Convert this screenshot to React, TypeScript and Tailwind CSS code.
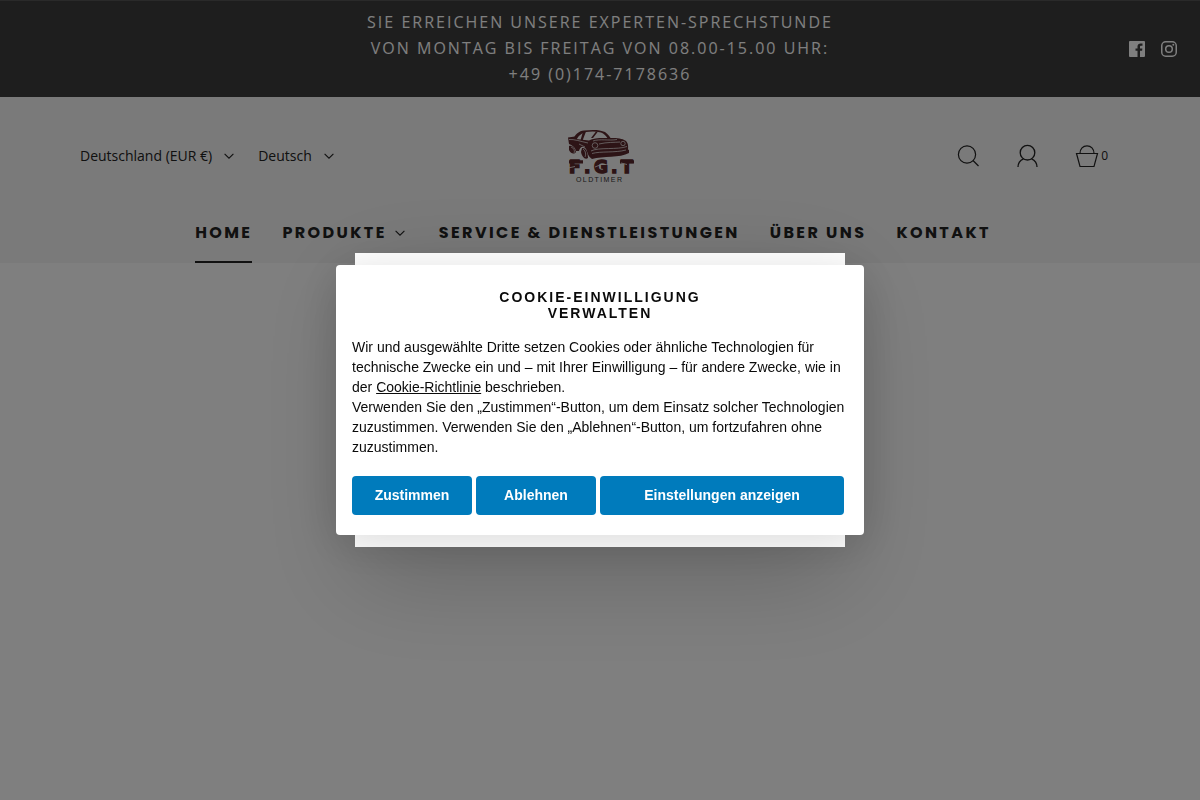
import React from "react";

const NAV = ["Home", "Produkte", "Service & Dienstleistungen", "Über uns", "Kontakt"];

function Chevron() {
  return (
    <svg width="10" height="6" viewBox="0 0 10 6" fill="none" stroke="currentColor" strokeWidth="1.1" aria-hidden="true">
      <path d="M0.6 0.8 5 5.2 9.4 0.8" />
    </svg>
  );
}

function Logo() {
  return (
    <svg width="68" height="54" viewBox="0 0 68 54" fill="#5a282c" role="img" aria-label="F.G.T Oldtimer">
      <path fillRule="evenodd" d="M6 11C8 5 12 2 17 1.500C25 .5 33 .5 38 3C41 5 43 8 44 10L41 10C39 7 37 4.500 34 3.500C29 2.200 23 2.400 19 3C14 4.500 11 7 9 12Z" />
      <path d="M16 2.500 19 2.500 15 13 13 13ZM29 2.500 31 2.500 26 9 24 9Z" />
      <path d="M1 8.500 8 7.500 9 10 22 11.500C27 8.500 34 9 43 9C51 8.500 57 10 59 12C62 15 61 19 61 22L60 24C54 26 43 26 37 28L24 28C21 28 21 24 19 20C16 16 13 18 12 22L9 22C8 18 5 16 2 15Z" />
      <path d="M2 17C5 16 8 19 9 23C7 26 3 24 2 21ZM15 19C19 18 21 24 21 29C18 31 15 28 14 23Z" />
      <g fill="none" stroke="#f4f4f4" strokeWidth="0.7">
        <path d="M2 10.500C7 10 14 12.500 21 14M12 15 18 18M26 12C33 9.500 42 12 50 10.500M32 15C40 13 48 13.500 53 13" />
        <path d="M24 22C31 18 51 21 60 17.500M25 24.500C34 22 48 24 59 21" />
        <circle cx="28" cy="16.500" r="2.800" />
        <circle cx="56" cy="14.500" r="2.200" />
        <path d="M4 18C7 19 8 22 7 24M16 20C19 22 19 26 18 28" />
      </g>
      <path d="M22 27.500C34 23 52 27 62 20.500L62 24C53 29 36 27 25 30Z" />
      <g fontFamily="DejaVu Sans, sans-serif" fontWeight="700" fontSize="17" stroke="#5a282c" strokeWidth="1.4">
        <text x="2" y="44">F</text>
        <text x="17" y="44">.</text>
        <text x="27" y="44">G</text>
        <text x="44" y="44">.</text>
        <text x="54" y="44">T</text>
      </g>
      <path d="M2 31.300H16V34.500H2ZM53 31.300H67V34.500H53Z" />
      <path d="M1 39 8 37.500M28 38 33 36M54 34 60 35.500" stroke="#f4f4f4" strokeWidth="0.8" />
      <text x="9" y="53" className="tracking-[0.2em]" fontFamily="Liberation Sans, sans-serif" fontSize="7" fill="#333">OLDTIMER</text>
    </svg>
  );
}

function AnnouncementBar() {
  return (
    <div className="grid grid-cols-[1fr_480px_1fr] items-center border-t border-[#555] bg-[#3c3c3c] pt-2 pb-[10px] text-white">
      <p className="col-start-2 text-center text-base leading-[26px] tracking-[2px] uppercase">
        Sie erreichen unsere Experten-Sprechstunde von Montag bis Freitag von 08.00-15.00 Uhr: +49 (0)174-7178636
      </p>
      <div className="flex justify-end gap-4 pt-[2px] pr-[23px]">
        <a href="#facebook" aria-label="Facebook">
          <svg width="16" height="16" viewBox="0 0 16 16" fill="currentColor">
            <path d="M15.100 0H.9A.9.900 0 0 0 0 .9v14.200c0 .5.400.9.900.9h7.600V9.800H6.500V7.400h2V5.600c0-2.100 1.300-3.200 3.100-3.200.9 0 1.700.1 1.900.1v2.200h-1.300c-1 0-1.200.5-1.200 1.200v1.500h2.400l-.3 2.400H11V16h4.100c.5 0 .9-.4.900-.9V.9a.9.900 0 0 0-.9-.9Z" />
          </svg>
        </a>
        <a href="#instagram" aria-label="Instagram">
          <svg width="16" height="16" viewBox="0 0 16 16" fill="none" stroke="currentColor" strokeWidth="1.500">
            <rect x="0.750" y="0.750" width="14.500" height="14.500" rx="4" />
            <circle cx="8" cy="8" r="3.300" />
            <circle cx="12.300" cy="3.700" r="1" fill="currentColor" stroke="none" />
          </svg>
        </a>
      </div>
    </div>
  );
}

function Header() {
  return (
    <header className="bg-[#f4f4f4] pt-8 text-[#222]">
      <div className="grid grid-cols-[1fr_auto_1fr] items-center px-20">
        <div className="flex gap-6 text-sm">
          <button className="flex items-center gap-3">Deutschland (EUR €) <Chevron /></button>
          <button className="flex items-center gap-3">Deutsch <Chevron /></button>
        </div>
        <a href="#home" className="pl-px"><Logo /></a>
        <div className="flex items-center justify-end gap-9 pr-3">
          <button aria-label="Suche">
            <svg width="24" height="24" viewBox="0 0 24 24" fill="none" stroke="currentColor" strokeWidth="1.200">
              <circle cx="12" cy="10.500" r="8.600" /><path d="m18 16.500 5.500 5.500" />
            </svg>
          </button>
          <button aria-label="Konto">
            <svg width="24" height="24" viewBox="0 0 24 24" fill="none" stroke="currentColor" strokeWidth="1.300">
              <circle cx="12.500" cy="8.700" r="7.300" /><path d="M3 23c0-3.800 2-6.600 5.500-8.200M22 23c0-3.800-2-6.600-5.500-8.200" />
            </svg>
          </button>
          <button aria-label="Warenkorb" className="flex items-center gap-[2px] text-xs">
            <svg width="24" height="24" viewBox="0 0 24 24" fill="none" stroke="currentColor" strokeWidth="1.200">
              <path d="M1.500 9.500h21l-3.500 13H5ZM5 9.500C5 5 8 1.800 12 1.800S19 5 19 9.500" />
            </svg>
            0
          </button>
        </div>
      </div>
      <nav className="mt-5 flex justify-center gap-[30px] pr-[14px] font-['Poppins','Open_Sans',sans-serif] text-base font-bold tracking-[0.15em] uppercase">
        {NAV.map((label, i) => (
          <a
            key={label}
            href={"#" + label}
            className={i === 0 ? "border-b-2 border-[#222] pt-[18px] pb-4 leading-6" : "flex items-center gap-2 self-start pt-[18px] leading-6"}
          >
            {label}
            {label === "Produkte" && <span className="pr-1"><Chevron /></span>}
          </a>
        ))}
      </nav>
    </header>
  );
}

function CookieDialog() {
  return (
    <div className="fixed inset-0 flex items-center justify-center bg-black/50">
      <div className="grid place-items-center">
        <div className="col-start-1 row-start-1 w-[490px] self-stretch bg-white shadow-[0_30px_100px_rgba(0,0,0,0.2)]" />
        <section
          role="dialog"
          aria-labelledby="cookie-title"
          className="col-start-1 row-start-1 my-3 w-[528px] rounded bg-white px-4 pt-6 pb-5 font-['Liberation_Sans',Arial,sans-serif] text-sm text-[#0a0a0a] shadow-[0_8px_48px_rgba(0,0,0,0.15)]"
        >
          <h2 id="cookie-title" className="mx-auto w-60 text-center leading-4 font-bold tracking-[2px] uppercase">
            Cookie-Einwilligung verwalten
          </h2>
          <p className="mt-4 leading-5">
            Wir und ausgewählte Dritte setzen Cookies oder ähnliche Technologien für technische Zwecke ein und – mit Ihrer Einwilligung – für andere Zwecke, wie in der{" "}
            <a href="#cookies" className="underline">Cookie-Richtlinie</a> beschrieben.
            <br />
            Verwenden Sie den „Zustimmen“-Button, um dem Einsatz solcher Technologien zuzustimmen. Verwenden Sie den „Ablehnen“-Button, um fortzufahren ohne zuzustimmen.
          </p>
          <div className="mt-[19px] mr-1 grid grid-cols-[120px_120px_1fr] gap-1 font-bold text-white">
            <button className="h-[39px] rounded bg-[#007bbc] pb-px">Zustimmen</button>
            <button className="h-[39px] rounded bg-[#007bbc] pb-px">Ablehnen</button>
            <button className="h-[39px] rounded bg-[#007bbc] pb-px">Einstellungen anzeigen</button>
          </div>
        </section>
      </div>
    </div>
  );
}

export default function App() {
  return (
    <div className="min-h-screen bg-white font-['Open_Sans','Noto_Sans',sans-serif]">
      <AnnouncementBar />
      <Header />
      <CookieDialog />
    </div>
  );
}
